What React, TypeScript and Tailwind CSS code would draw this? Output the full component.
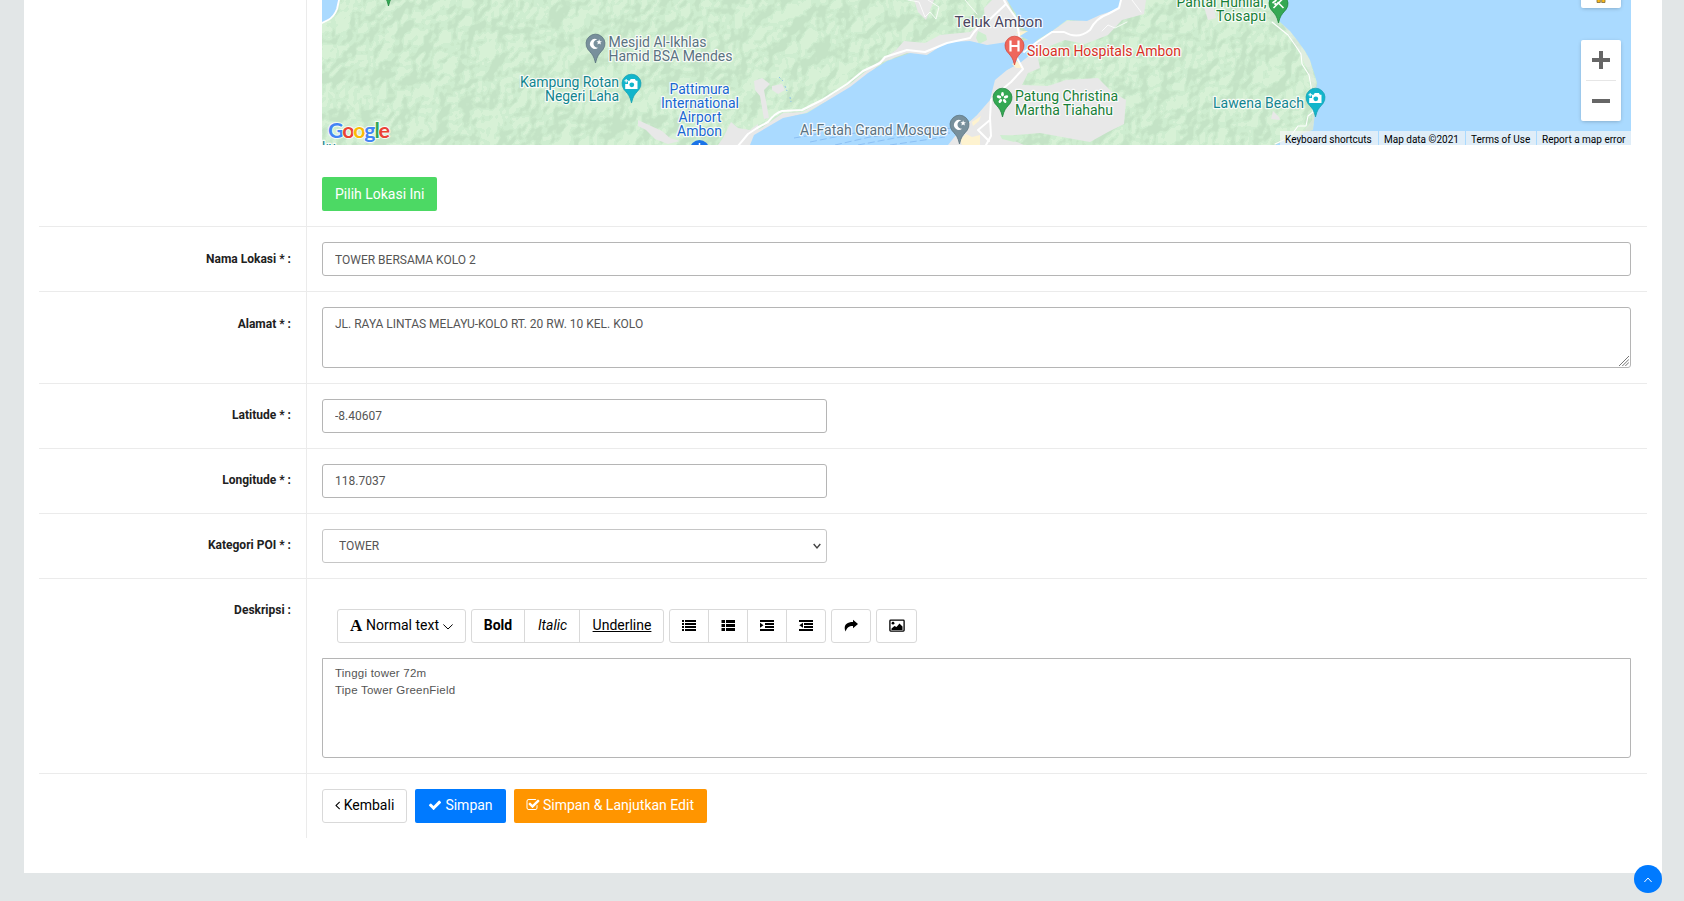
import React from "react";

type Anchor = "start" | "middle" | "end";

function Label({ x, y, w, color, children, anchor = "start", size = 14 }: { x: number; y: number; w: number; color: string; children: string; anchor?: Anchor; size?: number }) {
  return (
    <text x={x} y={y} textLength={w} textAnchor={anchor} fontSize={size} fill={color} stroke="#fff" strokeWidth={2.4} strokeOpacity={0.85} strokeLinejoin="round" paintOrder="stroke">
      {children}
    </text>
  );
}

function Pin({ x, y, color, edge, children }: { x: number; y: number; color: string; edge: string; children?: React.ReactNode }) {
  return (
    <g transform={`translate(${x} ${y})`}>
      <path d="M0 19L-1.3 14.5C-2.6 10.500-5.500 8-7.600 5.400A9.500 9.500 0 1 1 7.600 5.400C5.500 8 2.600 10.500 1.300 14.500Z" fill={color} stroke={edge} strokeWidth={0.7} />
      {children}
    </g>
  );
}

function Moon() {
  return (
    <g>
      <path d="M2.600 3.800A5 5 0 1 1 1.800-4.600A4.200 4.200 0 1 0 2.600 3.800Z" fill="#fff" />
      <path d="M3.600-4.700l.8 1.900 2 .1-1.500 1.300.5 2-1.800-1.100-1.700 1.100.5-2-1.500-1.300 2-.1z" fill="#fff" />
    </g>
  );
}

function Camera() {
  return (
    <g>
      <path d="M-3.500-3.200H-1.800L-.8-5H3.400L4.400-3.200H6V5H-6.300V0H-3.500Z" fill="#fff" />
      <circle cx={0.3} cy={0.8} r={2.4} fill="#12b5cb" />
      <path d="M-5.300-5v3.600M-7-3.200h3.600" stroke="#fff" strokeWidth={1} />
    </g>
  );
}

const northRoad = "M738 146L748 134L757 128L768 122Q775 113 782 111L802 110L822 100L847 84L863 71L880 63L885 57L907 50L925 52L947 43L970 38Q978 25 987 22L1006 4L1004 0";

function MapArt() {
  return (
    <svg className="block h-[145px] w-[1309px]" viewBox="322 0 1309 145" fontFamily="Roboto, sans-serif">
      <defs>
        <filter id="hills" x="0" y="0" width="1" height="1" colorInterpolationFilters="sRGB">
          <feTurbulence type="fractalNoise" baseFrequency="0.045 0.04" numOctaves="3" seed="8" />
          <feDiffuseLighting surfaceScale="9" diffuseConstant="1" lightingColor="#fff">
            <feDistantLight azimuth="225" elevation="45" />
          </feDiffuseLighting>
          <feComponentTransfer>
            <feFuncR type="discrete" tableValues=".75 .75 .75 .75 .76 .785 .808 .808 .87 .87" />
            <feFuncG type="discrete" tableValues=".87 .87 .87 .87 .88 .905 .933 .933 .955 .955" />
            <feFuncB type="discrete" tableValues=".76 .76 .76 .76 .77 .79 .816 .816 .855 .855" />
          </feComponentTransfer>
          <feGaussianBlur stdDeviation="0.5" />
        </filter>
      </defs>
      <rect x="322" width="1309" height="145" fill="#ceeed0" />
      <rect x="322" y="-5" width="1000" height="155" filter="url(#hills)" opacity="0.6" />

      <g fill="#e8e8e8">
        <path d="M723 138L731 122L738 128L750 130L758 124L760 145H718Z" />
        <path d="M638 120L662 131L670 138L680 141L668 144L655 139L646 130L638 126Z" />
        <path d="M754 81L762 78L770 84L764 90L769 118L764 119L760 96L755 90Z" />
        <path d="M772 86L782 84L785 90L778 94L772 90Z" />
        <path d="M760 129L783 113L803 112L850 84L870 68L896 50L904 41L925 43L940 35L970 32L985 20L984 8L992 0H1007L1020 30L1030 33L1012 44L985 46L970 42L947 44L925 56L907 53L883 62L868 74L850 89L805 113L783 119L750 145H740Z" />
        <path d="M914 0H934L930 10L926 20L918 12Z" />
        <path d="M1020 44L1037 42L1052 31L1067 21L1087 20L1100 13L1121 0H1146L1144 14L1122 20L1108 35L1085 44L1065 40L1050 46L1038 58L1040 68L1028 73L1022 85L1048 86L1066 80L1098 78L1112 92L1126 100L1124 124L1108 132L1090 142L1040 133L1003 136L1024 145H945L960 130L977 115L990 98L993 78L1020 62Z" />
        <path d="M1204 7L1214 8L1216 18L1208 20Z" />
        <path d="M1273 111L1279 117L1280 120L1271 119Z" />
        <path d="M1280 20L1297 38L1310 60L1317 90L1315 132L1302 134L1312 120L1313 90L1308 70L1296 46Z" opacity="0.45" />
      </g>
      <path d="M978 31L986 35L987 40L979 44L976 38ZM1000 135L1024 136L1014 142L1002 139Z" fill="#ceeed0" />

      <g fill="#aadaff">
        <path d="M322 0H339L337 9Q334 17 328 20L322 23Z" />
        <path d="M750 145L754 135L783 118L807 113L850 87L868 73L887 61L910 53L927 55L947 42L970 41L987 45L1007 42L1028 40L1020 36L1020 32L1028 32L1018 24L1016 14L1007 0H1121L1118 9L1100 15L1087 21L1067 20L1052 31L1037 40L1030 55L1020 63L1007 70L995 80L990 100L977 115L960 130L948 145Z" />
        <path d="M1268 0L1280 22L1290 31L1297 40L1305 51L1310 60L1315 76L1317 83L1315 95V113L1313 130L1290 138L1275 145H1631V0Z" />
      </g>
      <path d="M1016 32L1028 31L1020 36ZM1012 64L1017 61L1023 68L1016 68ZM960 140L966 134L972 137L980 135L980 145H962ZM972 122L981 116L979 121L973 126Z" fill="#fef3d0" />
      <g fill="none" stroke="#84b9f0" strokeWidth={0.8} strokeDasharray="7 3">
        <path d="M835 145L870 137L952 128M858 145L900 137L950 133M890 145L945 137M794 138L830 132M810 142L860 132" />
      </g>
      <g fill="none" stroke="#fff" strokeLinejoin="round" strokeLinecap="round">
        <path d="M339 0L337 9Q334 17 328 20L322 23" strokeWidth={1.8} />
        <path d={northRoad} strokeWidth={2} />
        <path d="M1006 4L1016 18L1019 34L1017 58L1023 69L1011 82L999 92L991 100L990 118L991 136L986 145M990 120L978 130L989 141M1024 52L1037 42L1052 32L1064 32Q1078 40 1090 30Q1096 18 1108 14L1119 8L1121 0" strokeWidth={2} />
        <path d="M1272 22L1288 35L1295 45L1301 54L1302 64L1309 75L1311 86L1313 112L1308 116L1306 126L1298 126L1290 137L1275 144" strokeWidth={1.1} />
        <path d="M908 0L919 2L925 17L930 12L936 19L939 7L928 0M965 0L977 14M1102 31L1108 25L1115 28L1127 22M1132 0L1141 12" strokeWidth={0.8} />
      </g>
      <path d="M779 77L783 81M785 86L787 91M790 97L791 102" stroke="#7db5f0" strokeWidth={0.8} strokeDasharray="2 2" />
      <path d="M1180 50h1v6h-1z" fill="#f3aaa0" />

      <Pin x={595.5} y={44} color="#78909c" edge="#546e7a"><Moon /></Pin>
      <Pin x={631.5} y={84} color="#12b5cb" edge="#129eaf"><Camera /></Pin>
      <Pin x={1014.5} y={46} color="#ee675c" edge="#d2433a">
        <path d="M-4-5.500V5.500M4-5.500V5.500M-4 0H4" stroke="#fff" strokeWidth={2.2} />
      </Pin>
      <Pin x={1002.500} y={98} color="#34a853" edge="#188038">
        <g fill="#fff">
          <ellipse cy={-3.700} rx={1.400} ry={2.300} />
          <ellipse cy={-3.700} rx={1.400} ry={2.300} transform="rotate(72)" />
          <ellipse cy={-3.700} rx={1.400} ry={2.300} transform="rotate(144)" />
          <ellipse cy={-3.700} rx={1.400} ry={2.300} transform="rotate(216)" />
          <ellipse cy={-3.700} rx={1.400} ry={2.300} transform="rotate(288)" />
        </g>
      </Pin>
      <Pin x={959.500} y={125} color="#78909c" edge="#546e7a"><Moon /></Pin>
      <Pin x={1278.500} y={4} color="#34a853" edge="#188038">
        <path d="M-5 4L4-5M-1-2L5 4M-6-1L-2-4" stroke="#fff" strokeWidth={1.600} />
        <circle cx={-3} cy={0} r={1.300} fill="#fff" />
      </Pin>
      <Pin x={1315.500} y={98} color="#12b5cb" edge="#129eaf"><Camera /></Pin>
      <Pin x={388.500} y={-13} color="#34a853" edge="#188038" />
      <circle cx={699.500} cy={149.500} r={9.500} fill="#1a73e8" />
      <path d="M699.500 143v3" stroke="#fff" strokeWidth={1.500} />

      <Label x={608.500} y={47} w={98} color="#5b7281">Mesjid Al-Ikhlas</Label>
      <Label x={608.500} y={61} w={124} color="#5b7281">Hamid BSA Mendes</Label>
      <Label x={520} y={87} w={99} color="#12858f">Kampung Rotan</Label>
      <Label x={545} y={101} w={74} color="#12858f">Negeri Laha</Label>
      <Label x={669.500} y={94} w={60} color="#1967d2">Pattimura</Label>
      <Label x={661} y={108} w={78} color="#1967d2">International</Label>
      <Label x={678.500} y={122} w={43} color="#1967d2">Airport</Label>
      <Label x={677} y={136} w={45} color="#1967d2">Ambon</Label>
      <Label x={954.500} y={27} w={88} color="#4b4660" size={15}>Teluk Ambon</Label>
      <Label x={1027} y={56} w={154} color="#d93025">Siloam Hospitals Ambon</Label>
      <Label x={1015} y={101} w={103} color="#188038">Patung Christina</Label>
      <Label x={1015} y={115} w={98} color="#188038">Martha Tiahahu</Label>
      <Label x={800} y={135} w={147} color="#5b7281">Al-Fatah Grand Mosque</Label>
      <Label x={1176.500} y={7} w={90} color="#188038">Pantai Hunilai,</Label>
      <Label x={1216} y={21} w={50} color="#188038">Toisapu</Label>
      <Label x={1213} y={108} w={91} color="#12858f">Lawena Beach</Label>
      <Label x={322} y={152} w={14} color="#12858f">ku</Label>

      <text x={328} y={137.500} fontSize={21.500} textLength={62} stroke="#fff" strokeWidth={2} strokeOpacity={0.8} paintOrder="stroke" fontFamily="Lato, sans-serif" fontWeight={700}>
        <tspan fill="#4285f4">G</tspan><tspan fill="#ea4335">o</tspan><tspan fill="#fbbc04">o</tspan><tspan fill="#4285f4">g</tspan><tspan fill="#34a853">l</tspan><tspan fill="#ea4335">e</tspan>
      </text>
    </svg>
  );
}

function MapView() {
  return (
    <div className="relative h-[145px] w-[1309px] overflow-hidden">
      <MapArt />
      <div className="absolute right-[10px] -top-8 flex h-10 w-10 items-end justify-center rounded-[2px] bg-white pb-[5px] shadow-[0_1px_4px_-1px_rgba(0,0,0,0.3)]">
        <svg className="h-3 w-[10px]" viewBox="0 0 10 12"><path d="M1 0H9V11.500H5.700V6H4.300V11.500H1Z" fill="#fbb917" stroke="#7d6a3a" strokeWidth={0.8} /></svg>
      </div>
      <div className="absolute right-[10px] top-10 flex h-[81px] w-10 flex-col items-center rounded-[2px] bg-white shadow-[0_1px_4px_-1px_rgba(0,0,0,0.3)]">
        <svg className="h-10 w-10 shrink-0" viewBox="0 0 40 40"><path d="M11 18h7v-7h4v7h7v4h-7v7h-4v-7h-7z" fill="#666" /></svg>
        <div className="h-px w-[30px] shrink-0 bg-[#e6e6e6]" />
        <svg className="h-10 w-10 shrink-0" viewBox="0 0 40 40"><path d="M11 18h18v4H11z" fill="#666" /></svg>
      </div>
      <div className="absolute bottom-0 right-0 flex h-[14px] gap-px text-[10px] leading-[18px] text-black">
        <span className="w-[98px] bg-[#f5f5f5]/70 pl-[5px] whitespace-nowrap">Keyboard shortcuts</span>
        <span className="w-[86px] bg-[#f5f5f5]/70 pl-[5px] whitespace-nowrap">Map data ©2021</span>
        <span className="w-[70px] bg-[#f5f5f5]/70 pl-[5px] whitespace-nowrap">Terms of Use</span>
        <span className="w-[94px] bg-[#f5f5f5]/70 pl-[5px] whitespace-nowrap">Report a map error</span>
      </div>
    </div>
  );
}

function Row({ label, children, raised = false }: { label: string; children: React.ReactNode; raised?: boolean }) {
  return (
    <div className="flex border-t border-[#ebebeb]">
      <div className={`w-[267px] shrink-0 pr-[15px] text-right text-[12px] font-bold leading-[18px] text-[#212121] ${raised ? "pt-[22px]" : "pt-[23px]"}`}>{label}</div>
      <div className="flex-1 border-l border-[#ebebeb] p-[15px]">{children}</div>
    </div>
  );
}

const field = "block h-[34px] rounded-[3px] border border-[#b5b5b5] bg-white px-3 text-[12px] text-[#555] outline-none";
const tool = "flex h-full items-center justify-center border-[#d9d9d9]";
const caption = "pb-[2px]";
const group = "flex h-[34px] rounded-[3px] border border-[#d9d9d9] text-[14px] text-black";

function ListIcon() {
  return <svg className="-mt-px h-[14px] w-[14px]" viewBox="0 0 14 14"><path d="M0 1h2v2H0zM3 1h11v2H3zM0 4h2v2H0zM3 4h11v2H3zM0 7h2v2H0zM3 7h11v2H3zM0 10h2v2H0zM3 10h11v2H3z" /></svg>;
}
function ThListIcon() {
  return <svg className="-mt-px h-[14px] w-[14px]" viewBox="0 0 14 14"><path d="M.5 1h3.500v3H.5zM5 1h9v3H5zM.5 5h3.500v3H.5zM5 5h9v3H5zM.5 9h3.500v3H.5zM5 9h9v3H5z" /></svg>;
}
function IndentIcon({ out = false }: { out?: boolean }) {
  return (
    <svg className="-mt-px h-[14px] w-[14px]" viewBox="0 0 14 14">
      <path d="M0 1h14v2H0zM5 4h9v2H5zM5 7h9v2H5zM0 10h14v2H0z" />
      {out ? <path d="M4 3.800v5L.3 6.300z" /> : <path d="M0 3.800v5l3.500-2.500z" />}
    </svg>
  );
}

export default function App() {
  return (
    <div className="relative h-[901px] overflow-hidden bg-[#e2e6e7] pl-6 font-['Roboto',sans-serif]">
      <div className="h-[873px] w-[1638px] bg-white px-[15px]">
        <div className="flex h-[226px]">
          <div className="w-[267px] shrink-0" />
          <div className="flex flex-1 flex-col items-start border-l border-[#ebebeb] pl-[15px]">
            <MapView />
            <button className="mt-8 h-[34px] w-[115px] rounded-[2px] bg-[#4cd964] pl-[13px] text-left text-[14px] text-white">Pilih Lokasi Ini</button>
          </div>
        </div>
        <Row label="Nama Lokasi * :">
          <input className={`${field} w-[1309px] pt-[2px]`} defaultValue="TOWER BERSAMA KOLO 2" />
        </Row>
        <Row label="Alamat * :">
          <div className="relative w-[1309px]">
            <textarea className="block h-[61px] w-full resize-none rounded-[3px] border border-[#b5b5b5] px-3 py-[8px] text-[12px] leading-[17px] text-[#555] outline-none" defaultValue="JL. RAYA LINTAS MELAYU-KOLO RT. 20 RW. 10 KEL. KOLO" />
            <svg className="absolute bottom-[2px] right-[2px] h-[10px] w-[10px]" viewBox="0 0 10 10" stroke="#666" strokeWidth={0.9}><path d="M0 10L10 0M3.300 10L10 3.300M6.300 10L10 6.300" /></svg>
          </div>
        </Row>
        <Row label="Latitude * :" raised>
          <input className={`${field} w-[505px]`} defaultValue="-8.40607" />
        </Row>
        <Row label="Longitude * :" raised>
          <input className={`${field} w-[505px]`} defaultValue="118.7037" />
        </Row>
        <Row label="Kategori POI * :" raised>
          <div className="relative w-[505px]">
            <select className="block h-[34px] w-full appearance-none rounded-[3px] border border-[#c6c6c6] bg-white px-4 text-[12px] text-[#555] outline-none"><option>TOWER</option></select>
            <svg className="pointer-events-none absolute right-[6px] top-[14px] h-[7px] w-2" viewBox="0 0 8 7" fill="none" stroke="#444" strokeWidth={1.400}><path d="M.7 1L4 5L7.300 1" /></svg>
          </div>
        </Row>
        <Row label="Deskripsi :" raised>
          <div className="flex gap-[5px] p-[15px]">
            <div className={`${group} w-[129px] items-center pb-[2px] pl-3`}>
              <span className="w-4 font-['Liberation_Serif',serif] text-[17px] font-bold leading-none">A</span>
              <span className="whitespace-nowrap">Normal text</span>
              <svg className="ml-[4px] mt-[4px] h-[6px] w-[10px]" viewBox="0 0 10 6" fill="none" stroke="#000" strokeWidth={1}><path d="M.4.5L5 5L9.600.5" /></svg>
            </div>
            <div className={`${group} w-[193px]`}>
              <span className={`${tool} ${caption} w-[53px] border-r font-bold`}>Bold</span>
              <span className={`${tool} ${caption} w-[55px] border-r pl-px italic`}>Italic</span>
              <span className={`${tool} ${caption} flex-1 pl-px underline`}>Underline</span>
            </div>
            <div className={`${group} w-[157px]`}>
              <span className={`${tool} w-[39px] border-r`}><ListIcon /></span>
              <span className={`${tool} w-[39px] border-r`}><ThListIcon /></span>
              <span className={`${tool} w-[39px] border-r`}><IndentIcon /></span>
              <span className={`${tool} flex-1`}><IndentIcon out /></span>
            </div>
            <div className={`${group} w-[40px] items-center justify-center`}>
              <svg className="-mt-px h-[14px] w-[14px]" viewBox="0 0 14 14"><path d="M9 .8L14 5L9 9.200V6.900C5.500 6.700 3 8 1.600 12.500C-.8 7.500 1.500 3 9 3Z" /></svg>
            </div>
            <div className={`${group} w-[41px] items-center justify-center`}>
              <svg className="-mt-px h-[14px] w-[16px]" viewBox="0 0 16 14"><rect x={0.900} y={1.100} width={14.200} height={11} rx={0.800} fill="none" stroke="#000" strokeWidth={1.300} /><path d="M2.500 11V9.500L5.500 7L7.500 8L10.500 4.500L13.500 7.500V11Z" /><circle cx={4} cy={4.200} r={1.400} /></svg>
            </div>
          </div>
          <div className="h-[100px] w-[1309px] rounded-b-[3px] border border-[#b5b5b5] px-3 py-[6px] font-['Liberation_Sans',sans-serif] text-[11.5px] leading-[17px] tracking-[0.22px] text-[#555]">
            <p>Tinggi tower 72m</p>
            <p>Tipe Tower GreenField</p>
          </div>
        </Row>
        <Row label="">
          <div className="flex gap-2 text-[14px]">
            <button className="flex h-[34px] w-[85px] items-center justify-center rounded-[3px] border border-[#d9d9d9] pb-[2px]">
              <svg className="mr-[3px] h-[14px] w-[6px]" viewBox="570 0 768 1792"><path d="M1203 544q0 13-10 23l-393 393 393 393q10 10 10 23t-10 23l-50 50q-10 10-23 10t-23-10l-466-466q-10-10-10-23t10-23l466-466q10-10 23-10t23 10l50 50q10 10 10 23z" /></svg>
              Kembali
            </button>
            <button className="flex h-[34px] w-[91px] items-center justify-center rounded-[2px] bg-[#007aff] pb-[2px] text-white">
              <svg className="mr-[3px] h-[14px] w-[14px]" viewBox="0 0 1792 1792" fill="currentColor"><path d="M1671 566q0 40-28 68l-724 724-136 136q-28 28-68 28t-68-28l-136-136-362-362q-28-28-28-68t28-68l136-136q28-28 68-28t68 28l294 295 656-657q28-28 68-28t68 28l136 136q28 28 28 68z" /></svg>
              Simpan
            </button>
            <button className="flex h-[34px] w-[193px] items-center justify-center rounded-[2px] bg-[#ff9500] pb-[2px] pr-px text-white">
              <svg className="mr-[3px] h-[14px] w-[14px]" viewBox="0 0 1792 1792" fill="currentColor"><path d="M1472 930v318q0 119-84.500 203.500t-203.500 84.500h-832q-119 0-203.500-84.500t-84.500-203.500v-832q0-119 84.500-203.500t203.500-84.500h832q63 0 117 25 15 7 18 23 3 17-9 29l-49 49q-10 10-23 10-3 0-9-2-23-6-45-6h-832q-66 0-113 47t-47 113v832q0 66 47 113t113 47h832q66 0 113-47t47-113v-254q0-13 9-22l64-64q10-10 23-10 6 0 12 3 20 8 20 29zm231-489l-814 814q-24 24-57 24t-57-24l-430-430q-24-24-24-57t24-57l110-110q24-24 57-24t57 24l263 263 647-647q24-24 57-24t57 24l110 110q24 24 24 57t-24 57z" /></svg>
              Simpan &amp; Lanjutkan Edit
            </button>
          </div>
        </Row>
      </div>
      <button className="absolute left-[1634px] top-[865px] flex h-7 w-7 items-center justify-center rounded-full bg-[#007aff]">
        <svg className="mt-px h-[6px] w-2" viewBox="0 0 8 6" fill="none" stroke="#fff" strokeWidth={1}><path d="M.4 5L4 1L7.600 5" /></svg>
      </button>
    </div>
  );
}
